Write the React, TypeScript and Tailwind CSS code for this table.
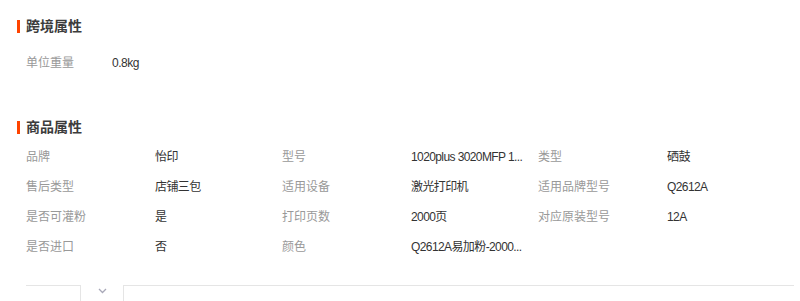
import React from "react";

const rows: [string, string][][] = [
  [["品牌", "怡印"], ["型号", "1020plus 3020MFP 1..."], ["类型", "硒鼓"]],
  [["售后类型", "店铺三包"], ["适用设备", "激光打印机"], ["适用品牌型号", "Q2612A"]],
  [["是否可灌粉", "是"], ["打印页数", "2000页"], ["对应原装型号", "12A"]],
  [["是否进口", "否"], ["颜色", "Q2612A易加粉-2000..."]],
];

function Title({ text }: { text: string }) {
  return (
    <div className="flex items-center h-[20px]">
      <div className="w-[3px] h-[13px] bg-[#ff4400] ml-[17px] mr-[6px]" />
      <span className="text-[14px] font-bold text-[#3c3c3c] leading-[20px]">{text}</span>
    </div>
  );
}

export default function App() {
  return (
    <div
      className="w-[800px] h-[301px] bg-white overflow-hidden relative"
      style={{ fontFamily: '"Liberation Sans", "Noto Sans CJK SC", sans-serif' }}
    >
      <div className="pt-[16px]">
        <Title text="跨境属性" />
      </div>
      <div className="flex items-center h-[20px] mt-[17px] text-[12px] leading-[20px]">
        <span className="pl-[26px] w-[112px] text-[#999]">单位重量</span>
        <span className="text-[#333] tracking-[-0.5px]">0.8kg</span>
      </div>
      <div className="mt-[44px]">
        <Title text="商品属性" />
      </div>
      <div className="mt-[5px] pl-[26px]">
        {rows.map((row, i) => (
          <div key={i} className="flex h-[30px] items-center text-[12px] leading-[20px]">
            {row.map(([k, v], j) => (
              <div key={j} className="flex w-[256px]">
                <span className="w-[129px] text-[#999]">{k}</span>
                <span className="text-[#333] whitespace-nowrap tracking-[-0.6px]">{v}</span>
              </div>
            ))}
          </div>
        ))}
      </div>
      <div className="flex mt-[23px] pl-[26px] pr-[6px]">
        <div className="w-[54px] border-t border-[#e5e5e5]" />
        <div className="w-[44px] h-[20px] border-l border-r border-b border-[#e5e5e5] rounded-b-[4px] flex justify-center pt-[2px]">
          <svg width="9" height="6" viewBox="0 0 9 6" className="mt-[1px]">
            <path d="M1 1 L4.5 4.5 L8 1" fill="none" stroke="#a8a8b8" strokeWidth="1.3" />
          </svg>
        </div>
        <div className="flex-1 border-t border-[#e5e5e5]" />
      </div>
    </div>
  );
}
